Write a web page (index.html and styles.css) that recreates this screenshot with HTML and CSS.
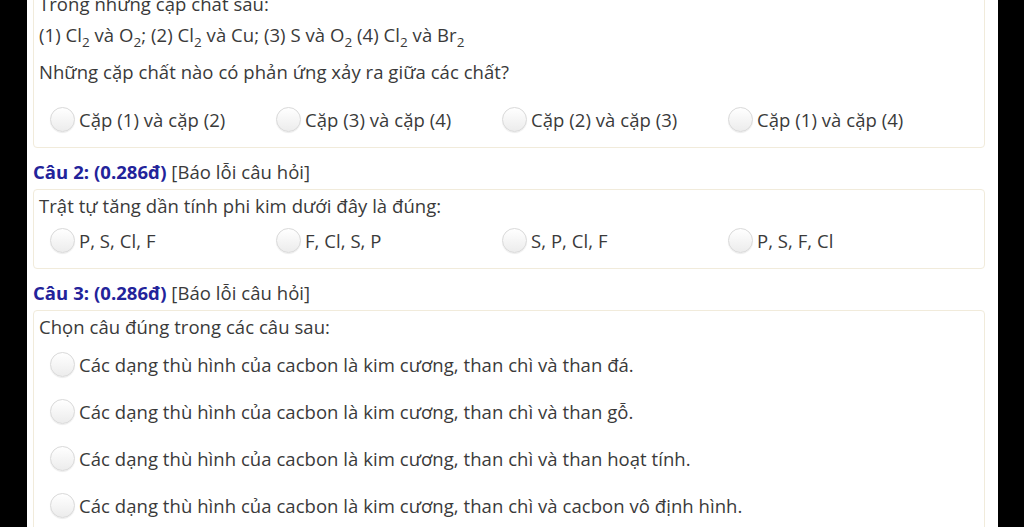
FILE: index.html
```html
<!DOCTYPE html>
<html lang="vi">
<head>
<meta charset="utf-8">
<link rel="stylesheet" href="styles.css">
</head>
<body>
<div class="page">
  <div class="card first">
    <p class="q">Trong những cặp chất sau:</p>
    <p class="q">(1) Cl<sub>2</sub> và O<sub>2</sub>; (2) Cl<sub>2</sub> và Cu; (3) S và O<sub>2</sub> (4) Cl<sub>2</sub> và Br<sub>2</sub></p>
    <p class="q last">Những cặp chất nào có phản ứng xảy ra giữa các chất?</p>
    <div class="opts grid4">
      <label class="opt"><span class="radio"></span>Cặp (1) và cặp (2)</label>
      <label class="opt"><span class="radio"></span>Cặp (3) và cặp (4)</label>
      <label class="opt"><span class="radio"></span>Cặp (2) và cặp (3)</label>
      <label class="opt"><span class="radio"></span>Cặp (1) và cặp (4)</label>
    </div>
  </div>

  <div class="title"><b>Câu 2: (0.286đ)</b> [Báo lỗi câu hỏi]</div>
  <div class="card">
    <p class="q">Trật tự tăng dần tính phi kim dưới đây là đúng:</p>
    <div class="opts grid4 tight">
      <label class="opt"><span class="radio"></span>P, S, Cl, F</label>
      <label class="opt"><span class="radio"></span>F, Cl, S, P</label>
      <label class="opt"><span class="radio"></span>S, P, Cl, F</label>
      <label class="opt"><span class="radio"></span>P, S, F, Cl</label>
    </div>
  </div>

  <div class="title"><b>Câu 3: (0.286đ)</b> [Báo lỗi câu hỏi]</div>
  <div class="card">
    <p class="q">Chọn câu đúng trong các câu sau:</p>
    <div class="opts list">
      <label class="opt"><span class="radio"></span>Các dạng thù hình của cacbon là kim cương, than chì và than đá.</label>
      <label class="opt"><span class="radio"></span>Các dạng thù hình của cacbon là kim cương, than chì và than gỗ.</label>
      <label class="opt"><span class="radio"></span>Các dạng thù hình của cacbon là kim cương, than chì và than hoạt tính.</label>
      <label class="opt"><span class="radio"></span>Các dạng thù hình của cacbon là kim cương, than chì và cacbon vô định hình.</label>
    </div>
  </div>
</div>
</body>
</html>
```

FILE: styles.css
```css
html, body {
  margin: 0;
  padding: 0;
  background: #000;
  height: 100%;
  overflow: hidden;
}
body {
  font-family: "Open Sans", "Noto Sans", sans-serif;
  font-size: 18.5px;
  letter-spacing: 0.05px;
  color: #3a3a3a;
}
.page {
  margin: 0 26px 0 27px;
  background: #fff;
  min-height: 100%;
  padding: 0 13px 0 6px;
}
.card {
  border: 1px solid #f1ebdb;
  border-radius: 4px;
  padding: 4px 5px 15px;
}
.card.first {
  margin-top: -13px;
}
.q {
  margin: 0;
  line-height: 24px;
}
.q + .q {
  margin-top: 7px;
}
.q.last {
  margin-top: 13px;
  margin-bottom: 23px;
}
sub {
  font-size: 13.5px;
  vertical-align: -5px;
  line-height: 0;
}
.title {
  margin: 12px 0 5px;
  line-height: 24px;
}
.title b {
  color: #23239a;
  font-weight: 700;
}
.opts {
  padding-left: 11px;
}
.grid4 {
  display: grid;
  grid-template-columns: 226px 226px 226px 226px;
}
.tight {
  margin-top: 10px;
}
.list {
  display: flex;
  flex-direction: column;
  gap: 22px;
  margin-top: 13px;
}
.opt {
  display: flex;
  align-items: center;
  gap: 4px;
  line-height: 25px;
}
.radio {
  width: 23px;
  height: 23px;
  border-radius: 50%;
  border: 1px solid #d9d9d9;
  background: linear-gradient(#ffffff, #ececec);
  box-shadow: 0 1px 1px rgba(0,0,0,0.08);
  flex: none;
}
```
